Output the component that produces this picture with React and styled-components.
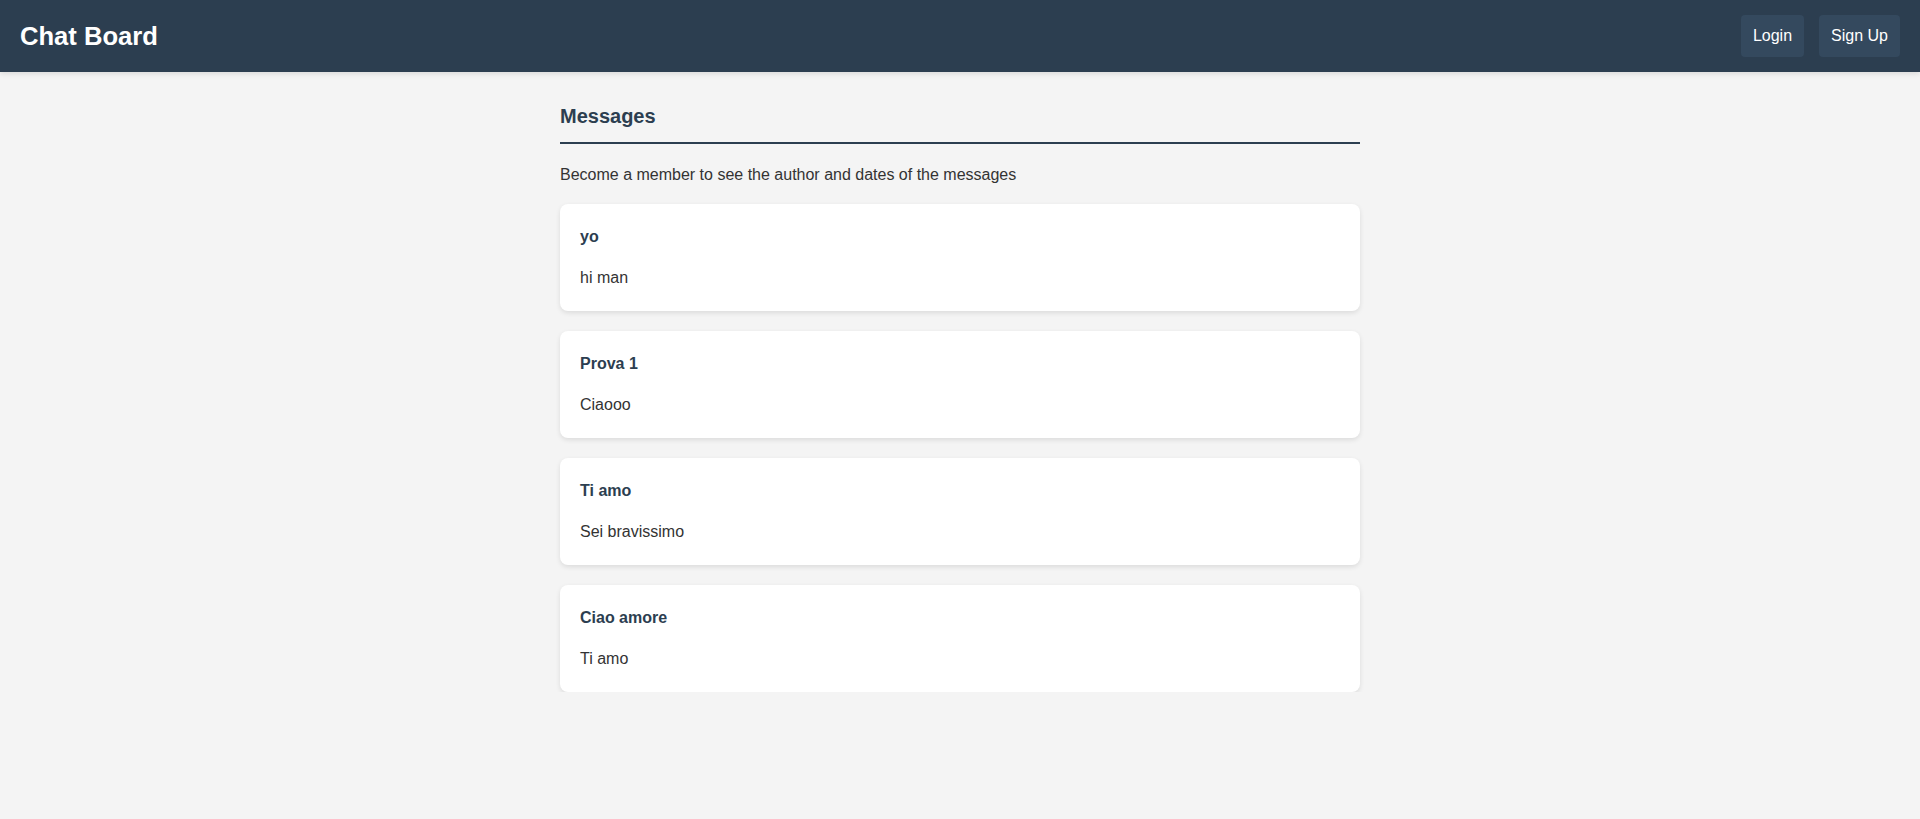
import React from "react";
import styled, { createGlobalStyle } from "styled-components";

const messages = [
  { title: "yo", text: "hi man" },
  { title: "Prova 1", text: "Ciaooo" },
  { title: "Ti amo", text: "Sei bravissimo" },
  { title: "Ciao amore", text: "Ti amo" },
];

const App = () => {
  return (
    <>
      <GlobalStyle />
      <Header>
        <Logo>Chat Board</Logo>
        <Nav>
          <NavButton>Login</NavButton>
          <NavButton>Sign Up</NavButton>
        </Nav>
      </Header>
      <Main>
        <Heading>Messages</Heading>
        <Notice>Become a member to see the author and dates of the messages</Notice>
        <List>
          {messages.map((m, i) => (
            <Card key={i}>
              <CardTitle>{m.title}</CardTitle>
              <CardText>{m.text}</CardText>
            </Card>
          ))}
        </List>
      </Main>
    </>
  );
};

export default App;

const GlobalStyle = createGlobalStyle`
  * {
    box-sizing: border-box;
  }
  body {
    margin: 0;
    background-color: #f4f4f4;
    font-family: "Liberation Sans", Arial, sans-serif;
    color: #333;
  }
`;

const Header = styled.header`
  height: 72px;
  padding: 0 20px;
  display: flex;
  align-items: center;
  justify-content: space-between;
  background-color: #2c3e50;
  box-shadow: 0 2px 5px rgba(0, 0, 0, 0.1);
`;

const Logo = styled.h1`
  margin: 0;
  font-size: 25.6px;
  font-weight: 700;
  color: #fff;
`;

const Nav = styled.nav`
  display: flex;
  gap: 15px;
`;

const NavButton = styled.button`
  border: none;
  border-radius: 4px;
  padding: 12px;
  background-color: #34495e;
  color: #fff;
  font-family: inherit;
  font-size: 16px;
  line-height: 18px;
  cursor: pointer;
`;

const Main = styled.main`
  max-width: 800px;
  margin: 33px auto 0 auto;
`;

const Heading = styled.h2`
  margin: 0;
  padding-bottom: 14px;
  font-size: 20px;
  line-height: 23px;
  font-weight: 700;
  color: #2c3e50;
  border-bottom: 2px solid #2c3e50;
`;

const Notice = styled.p`
  margin: 22px 0 20px 0;
  font-size: 16px;
  line-height: 18px;
`;

const List = styled.div`
  display: flex;
  flex-direction: column;
  gap: 20px;
`;

const Card = styled.div`
  padding: 20px;
  background-color: #fff;
  border-radius: 8px;
  box-shadow: 0 2px 5px rgba(0, 0, 0, 0.1);
`;

const CardTitle = styled.h3`
  margin: 0;
  font-size: 16px;
  line-height: 26px;
  font-weight: 700;
  color: #2c3e50;
`;

const CardText = styled.p`
  margin: 15px 0 0 0;
  font-size: 16px;
  line-height: 26px;
  color: #333;
`;
